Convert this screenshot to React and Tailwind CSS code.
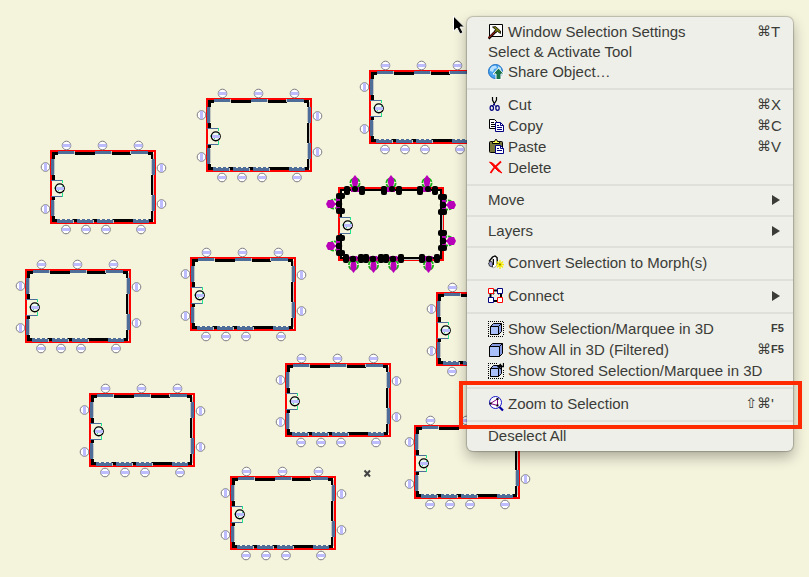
import clsx from "clsx";

const rooms = [
  { id: 1, x: 206, y: 98 },
  { id: 2, x: 50, y: 150 },
  { id: 3, x: 369, y: 70 },
  { id: 4, x: 25, y: 269 },
  { id: 5, x: 190, y: 257 },
  { id: 6, x: 89, y: 393 },
  { id: 7, x: 285, y: 363 },
  { id: 8, x: 230, y: 476 },
  { id: 9, x: 436, y: 292 },
  { id: 10, x: 414, y: 425 },
  { id: 11, x: 338, y: 187, selected: true },
];

const topTags = [17, 53, 89];
const bottomTags = [16, 36, 56, 91];
const leftTags = [17, 59];
const rightTags = [18, 54];

function Tag({ x, y, vertical }) {
  return (
    <g>
      <circle cx={x} cy={y} r="4.3" fill="#fff" stroke="#7c7c84" />
      {vertical ? (
        <rect x={x - 1.5} y={y - 4} width="3" height="8" fill="#bcbcff" />
      ) : (
        <rect x={x - 4} y={y - 1.5} width="8" height="3" fill="#bcbcff" />
      )}
    </g>
  );
}

function Door() {
  return (
    <g>
      <rect x="2" y="30" width="4" height="17" fill="#f4f3dc" />
      <path d="M1 30.5h11M1 46.5h11" stroke="#4f6d99" />
      <path d="M12.5 30v3M12.5 43v4M7 42l6-8M4 38h3M9 43l3-2" stroke="#1fe58b" />
      <circle cx="9.8" cy="38.3" r="4.4" fill="#eefaf0" stroke="#000" strokeWidth="1.4" />
      <path d="M8 41l5-5" stroke="#3fdc9a" />
      <rect x="6" y="37" width="8" height="3" fill="#bcbcff" />
    </g>
  );
}

function PlainWalls() {
  return (
    <g shapeRendering="crispEdges">
      <path d="M2 3.5h101M2 70.500h101M3.500 2v70" stroke="#000" strokeWidth="3" />
      <path d="M102 3v69" stroke="#000" strokeWidth="2" />
      <path d="M103.500 4v66" stroke="#c4c6c2" />
      <g fill="#4f6d99">
        {[8, 45, 81].map((x) => (
          <rect key={x} x={x} y="1" width="17" height="3" />
        ))}
        {[7, 27, 47, 83].map((x) => (
          <rect key={x} x={x} y="70" width="16" height="3" />
        ))}
        {[9, 50].map((y) => (
          <rect key={y} x="1" y={y} width="3" height="16" />
        ))}
        {[9, 45].map((y) => (
          <rect key={y} x="102" y={y} width="3" height="16" />
        ))}
      </g>
      <path
        d="M8 4.500h17M45 4.500h17M81 4.500h17M4.500 9v16M4.500 50v16M101.500 9v16M101.500 45v16"
        stroke="#f4f3dc"
      />
      <path
        d="M7 69.500h16M27 69.500h16M47 69.500h16M83 69.500h16"
        stroke="#f4f3dc"
      />
      <path
        d="M7 69.500h16M27 69.500h16M47 69.500h16M83 69.500h16"
        stroke="#4f6d99"
        strokeDasharray="3 2"
      />
      <path d="M24.500 1v3M61.500 1v3M80.500 1v3M4.500 9v15M4.500 51v14M101.500 10v14M101.500 46v14M23.500 70v3M43.500 70v3M63.500 70v3" stroke="#c4c6c2" />
    </g>
  );
}

function SelectedWalls() {
  return (
    <g>
      <rect x="3" y="3" width="100" height="68" fill="none" stroke="#000" strokeWidth="2" />
      <path d="M104.500 12v50M66 72.500h16" stroke="#c4c6c2" />
      <g fill="none" stroke="#19b319" strokeWidth="1.800" strokeDasharray="6 1">
        {topTags.map((x) => <circle key={x} cx={x} cy="-4" r="4.600" />)}
        {bottomTags.map((x) => <circle key={x} cx={x - 0.5} cy="78" r="4.600" />)}
        {leftTags.map((y) => <circle key={y} cx="-4" cy={y} r="4.600" />)}
        {rightTags.map((y) => <circle key={y} cx="110" cy={y} r="4.600" />)}
      </g>
      <g fill="#b800b8">
        {topTags.map((x) => (
          <path key={x} d={`M${x} -12l3 4v4l-1 4h2v5h-8v-5h2l-1-4v-4z`} />
        ))}
        {bottomTags.map((x) => (
          <path key={x} d={`M${x - 0.5} 86l-3-4v-4l1-4h-2v-5h8v5h-2l1 4v4z`} />
        ))}
        {leftTags.map((y) => (
          <path key={y} d={`M-12 ${y}l2-4h5l2 3h1v-6h4v14h-4v-6h-1l-2 3h-5z`} />
        ))}
        {rightTags.map((y) => (
          <path key={y} d={`M118 ${y}l-2-4h-5l-2 3h-1v-6h-4v14h4v-6h1l2 3h5z`} />
        ))}
      </g>
      {[9, 24, 46, 61, 82, 97].map((x) => (
        <rect key={x} x={x - 3} y="-1" width="6" height="9" rx="2" />
      ))}
      {[17, 54, 90].map((x) => (
        <circle key={x} cx={x} cy="2" r="3" />
      ))}
      {[8, 23, 28, 43, 48, 63, 84, 99].map((x) => (
        <rect key={x} x={x - 3} y="67" width="6" height="9" rx="2" />
      ))}
      {[15, 35, 55, 91].map((x) => (
        <circle key={x} cx={x} cy="72" r="3.200" />
      ))}
      {[9, 24, 51, 66].map((y) => (
        <rect key={y} x="-2" y={y - 3} width="9" height="6" rx="2" />
      ))}
      {[10, 25, 46, 61].map((y) => (
        <rect key={y} x="100" y={y - 3} width="9" height="6" rx="2" />
      ))}
      {[17, 59].map((y) => (
        <circle key={y} cx="1" cy={y} r="3.200" />
      ))}
      {[18, 54].map((y) => (
        <circle key={y} cx="105" cy={y} r="3.200" />
      ))}
    </g>
  );
}

function Room({ x, y, selected }) {
  return (
    <g transform={`translate(${x} ${y})`}>
      <rect x="1" y="1" width="104" height="72" fill="none" stroke="#f00" strokeWidth="2" />
      {selected ? <SelectedWalls /> : <PlainWalls />}
      <Door />
      {!selected && (
        <>
          {topTags.map((cx) => <Tag key={cx} x={cx - 0.5} y={-4.5} />)}
          {bottomTags.map((cx) => <Tag key={cx} x={cx} y={79.5} />)}
          {leftTags.map((cy) => <Tag key={cy} x={-4.5} y={cy} vertical />)}
          {rightTags.map((cy) => <Tag key={cy} x={111.5} y={cy} vertical />)}
        </>
      )}
    </g>
  );
}

function Cube() {
  return (
    <g stroke="#000" strokeLinejoin="round">
      <path d="M2.500 5.500l3-3h8v8l-3 3h-8z" fill="#8fa3e8" />
      <path d="M2.500 5.500h8v8h-8z" fill="#a9c0fa" />
      <path d="M10.500 5.500l3-3" />
    </g>
  );
}

const icons = {
  settings: (
    <>
      <path d="M1.500.5h13v12h-13z" fill="#fff" stroke="#000" />
      <path d="M.5 14.500L8 7" stroke="#000" strokeWidth="2.600" />
      <path d="M.5 14L8 7" stroke="#8b1a10" strokeWidth="1.200" />
      <path d="M4.500 3l3-.5 5 4.500v2.500l-3-2-2 1-1-1 1-2z" fill="#77770c" stroke="#000" strokeWidth="0.800" />
    </>
  ),
  share: (
    <>
      <circle cx="7.500" cy="7.500" r="7" fill="#4aa3ee" stroke="#1d6fc4" />
      <path d="M2 5c1-3 4-4 6-3l1 2-3 1-1 3-3-1zM10 2l3 2v2l-3-1z" fill="#b8e2ff" />
      <path d="M10.500 4l5.500 6h-3v5.500H8V10H5z" fill="#19744b" stroke="#fff" />
    </>
  ),
  cut: (
    <>
      <path d="M4.500 0v3l2 4M8.500 0v3l-3 5" fill="none" stroke="#000" strokeWidth="1.200" />
      <path d="M6.500 6v2l2 2M6 7l-2 3" fill="none" stroke="#000080" />
      <ellipse cx="3.800" cy="11" rx="1.700" ry="2.300" fill="none" stroke="#000080" strokeWidth="1.200" />
      <ellipse cx="9.500" cy="11" rx="1.700" ry="2.300" fill="none" stroke="#000080" strokeWidth="1.200" />
    </>
  ),
  copy: (
    <>
      <path d="M1.500 1.500h5l2 2v7h-7z" fill="#fff" stroke="#000" />
      <path d="M3 4.500h3M3 6.500h4M3 8.500h4" stroke="#000" />
      <path d="M7.500 4.500h5l3 3v6h-8z" fill="#fff" stroke="#000080" />
      <path d="M12.500 4.500v3h3M9 7.500h2M9 9.500h5M9 11.500h5" fill="none" stroke="#000080" />
    </>
  ),
  paste: (
    <>
      <rect x="1.500" y="2.500" width="13" height="11" rx="1" fill="#77773b" stroke="#000" />
      <path d="M4.500 4.500v-2h2l1-2h1l1 2h2v2z" fill="#ffff57" stroke="#000" />
      <path d="M7.500 6.500h5l3 3v5h-8z" fill="#fff" stroke="#000080" />
      <path d="M12.500 6.500v3h3M9 9.500h2M9 11.500h5" fill="none" stroke="#000080" />
    </>
  ),
  remove: (
    <>
      <path d="M1.500 2l3 1 4 4 5.500 6-4-2-4-4z" fill="#f00" stroke="#f00" />
      <path d="M13 1.500L6 8l-3.500 5" fill="none" stroke="#f00" strokeWidth="1.800" />
    </>
  ),
  convert: (
    <>
      <path d="M4.500 2.500l3-1.500 2 2-1 8-3 2-1-1z" fill="#fff" stroke="#999" strokeWidth="0.800" />
      <path d="M1 6.500l3.500-4.500L7 1l2 1.500.5 6" fill="none" stroke="#000" strokeWidth="1.300" />
      <path d="M.5 8l2.500-2 1.500 2v4l-3-1z" fill="#9a9ad8" stroke="#222" strokeWidth="0.800" />
      <path d="M5.500 4v6" stroke="#000" />
      <path d="M12 5v9M8 9.500h8M9 6.500l6 6M15 6.500l-6 6" stroke="#f5ec0a" strokeWidth="1.300" />
      <circle cx="12" cy="9.500" r="1" fill="#8a7c00" />
    </>
  ),
  connect: (
    <>
      <path d="M5 2.500h6M5 13h6M2.500 5v6M13 5v6M5 5l1 1M11 5l-1 1" stroke="#000" strokeWidth="2" />
      <path d="M.5.5h5v5h-5zM9.500 9.500h5v5h-5z" fill="#fff" stroke="#f00" />
      <path d="M9.500.5h5v5h-5zM.5 9.500h5v5h-5z" fill="#fff" stroke="#000080" />
    </>
  ),
  marquee: (
    <>
      <path
        d="M0 .5h16M0 15.500h16M.5 0v16M15.500 1v14"
        stroke="#000"
        strokeDasharray="1 1"
        shapeRendering="crispEdges"
      />
      <Cube />
    </>
  ),
  cube: (
    <g stroke="#000" strokeLinejoin="round">
      <path d="M1.500 4.500l3-3h10v10l-3 3h-10z" fill="#8398df" />
      <path d="M1.500 4.500h10v10h-10z" fill="#a9c0fa" />
      <path d="M11.500 4.500l3-3" />
    </g>
  ),
  stored: (
    <>
      <path
        d="M0 .5h10M0 15.500h16M.5 0v16M15.500 7v8"
        stroke="#000"
        strokeDasharray="1 1"
        shapeRendering="crispEdges"
      />
      <Cube />
      <path d="M15.500 0v3.500h-5M13 1l-3 2.500L13 6" fill="none" stroke="#000" strokeWidth="1.300" />
    </>
  ),
  zoom: (
    <>
      <circle cx="7.500" cy="6.500" r="6" fill="#fff" stroke="#1414c8" />
      <path d="M2.500 7.500L9.500 3v6.500z" stroke="#800080" fill="none" />
      <path d="M1.500 6.500h2v2h-2zM8.500 2h2v2h-2zM8.500 8.500h2v2h-2z" fill="#000" />
      <path d="M11.500 11l3.500 3.500" stroke="#0000a0" strokeWidth="2.200" />
    </>
  ),
};

const menu = [
  [
    { label: "Window Selection Settings", icon: "settings", mods: "⌘", hotkey: "T" },
    { label: "Select & Activate Tool" },
    { label: "Share Object…", icon: "share" },
  ],
  [
    { label: "Cut", icon: "cut", mods: "⌘", hotkey: "X" },
    { label: "Copy", icon: "copy", mods: "⌘", hotkey: "C" },
    { label: "Paste", icon: "paste", mods: "⌘", hotkey: "V" },
    { label: "Delete", icon: "remove" },
  ],
  [{ label: "Move", submenu: true }],
  [{ label: "Layers", submenu: true }],
  [{ label: "Convert Selection to Morph(s)", icon: "convert" }],
  [{ label: "Connect", icon: "connect", submenu: true }],
  [
    { label: "Show Selection/Marquee in 3D", icon: "marquee", hotkey: "F5" },
    { label: "Show All in 3D (Filtered)", icon: "cube", mods: "⌘", hotkey: "F5" },
    { label: "Show Stored Selection/Marquee in 3D", icon: "stored" },
  ],
  [{ label: "Zoom to Selection", icon: "zoom", mods: "⇧⌘", hotkey: "'" }],
  [{ label: "Deselect All" }],
];

function MenuItem({ label, icon, mods, hotkey, submenu }) {
  return (
    <button
      type="button"
      role="menuitem"
      className={clsx(
        "flex w-full items-center pb-0.5 pl-[21px] text-left text-[15px] leading-[19px] whitespace-nowrap",
        icon ? "h-[21px]" : "h-[19px]"
      )}
    >
      {icon && (
        <svg className="mt-px mr-1 h-4 w-4 shrink-0" viewBox="0 0 16 16" aria-hidden="true">
          {icons[icon]}
        </svg>
      )}
      <span className="flex-1">{label}</span>
      {mods && <span className="font-['DejaVu_Sans',sans-serif] text-[14px]">{mods}</span>}
      <span className={clsx("w-[22px] shrink-0", hotkey === "F5" && "text-[11px] font-bold")}>
        {hotkey}
        {submenu && (
          <svg className="ml-px h-[10px] w-2" viewBox="0 0 8 10" aria-hidden="true">
            <path d="M0 0l8 5-8 5z" fill="currentColor" />
          </svg>
        )}
      </span>
    </button>
  );
}

function ContextMenu() {
  return (
    <div
      role="menu"
      className="absolute top-[17px] left-[467px] w-[326px] divide-y-2 divide-[#dfe0da] rounded-md bg-[#eeefe9] text-[#3b3c38] shadow-[0_0_1px_1px_rgba(0,0,0,0.2),0_6px_14px_rgba(0,0,0,0.3)]"
    >
      {menu.map((group, i) => (
        <div key={i} role="group" className="py-[5px]">
          {group.map((item) => (
            <MenuItem key={item.label} {...item} />
          ))}
        </div>
      ))}
    </div>
  );
}

export default function App() {
  return (
    <main className="relative min-h-screen overflow-hidden bg-[#f4f3dc] font-['Liberation_Sans',Arial,sans-serif]">
      <svg className="block h-screen w-full" role="img" aria-label="Drawing canvas">
        {rooms.map((room) => (
          <Room key={room.id} {...room} />
        ))}
        <path d="M364.500 470.500l5.500 6M370 470.500l-5.500 6" stroke="#444" strokeWidth="2" />
        <path
          d="M453.500 16v15l3.500-3 3 6 3-1.500-3-5.500h4.500z"
          fill="#000"
          stroke="#fff"
        />
      </svg>
      <ContextMenu />
      <div className="pointer-events-none absolute top-[381px] left-[459px] h-12 w-[343px] border-4 border-[#ff2a00]" />
    </main>
  );
}
